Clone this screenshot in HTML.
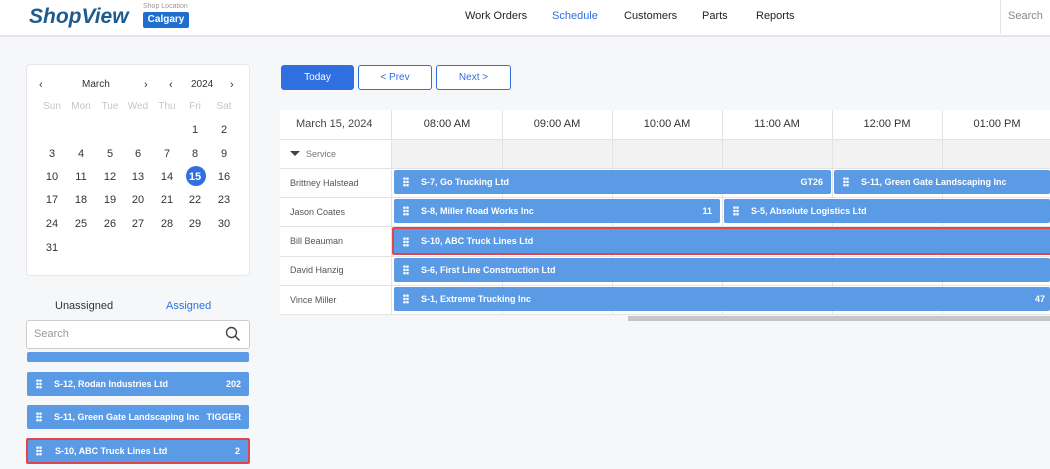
<!DOCTYPE html>
<html><head><style>
*{box-sizing:border-box;margin:0;padding:0}
body{width:1050px;height:469px;overflow:hidden;background:#f6f7f9;font-family:"Liberation Sans",sans-serif;position:relative;color:#333}
.a{position:absolute}
.hdr{left:0;top:0;width:1050px;height:37px;background:#fff;border-bottom:2px solid #e3e5e8}
.nav{top:10px;font-size:11px;color:#222}
.card{left:26px;top:64px;width:224px;height:212px;background:#fff;border:1px solid #e6e8eb;border-radius:4px}
.d{position:absolute;font-size:11px;color:#333;width:20px;text-align:center}
.wd{position:absolute;font-size:10px;color:#c4c6ca;width:30px;text-align:center}
.btn{top:65px;height:25px;border:1px solid #2f6fdf;border-radius:3px;font-size:10px;display:flex;align-items:center;justify-content:center;color:#2f6fdf;background:#fff}
.ev{position:absolute;background:#5b9be6;color:#fff;font-size:9px;font-weight:bold;height:24px;line-height:24px;padding-left:27px;border-radius:2px;white-space:nowrap;overflow:hidden}
.ev .g{position:absolute;left:9px;top:7px;width:6px;height:10px;background:radial-gradient(circle,#fff 1.2px,transparent 1.4px) 0 0/3px 3.3px}
.ev .r{position:absolute;right:8px;top:0}
.red{border:2px solid #e0474c;line-height:20px}
.lbl{position:absolute;left:290px;font-size:9px;color:#555}
.hh{position:absolute;top:118px;font-size:11px;color:#333;width:110px;text-align:center}
</style></head><body>
<div class="a hdr"></div>
<div class="a" style="left:29px;top:5px;font-size:21px;font-weight:bold;font-style:italic;color:#1e5b8c">ShopView</div>
<div class="a" style="left:143px;top:3px;font-size:7px;color:#999">Shop Location</div>
<div class="a" style="left:143px;top:12px;width:46px;height:16px;background:#1e6fcf;border-radius:2px;color:#fff;font-size:10px;font-weight:bold;text-align:center;line-height:16px">Calgary</div>
<div class="a nav" style="left:465px">Work Orders</div>
<div class="a nav" style="left:552px;color:#2f6fdf">Schedule</div>
<div class="a nav" style="left:624px">Customers</div>
<div class="a nav" style="left:702px">Parts</div>
<div class="a nav" style="left:756px">Reports</div>
<div class="a" style="left:1000px;top:0;width:50px;height:34px;border-left:1px solid #e3e5e8"></div>
<div class="a nav" style="left:1008px;color:#888">Search</div>

<div class="a card"></div>
<div class="a" style="left:39px;top:79px;font-size:11px">‹</div>
<div class="a" style="left:82px;top:79px;font-size:10px">March</div>
<div class="a" style="left:144px;top:79px;font-size:11px">›</div>
<div class="a" style="left:169px;top:79px;font-size:11px">‹</div>
<div class="a" style="left:191px;top:79px;font-size:10px">2024</div>
<div class="a" style="left:230px;top:79px;font-size:11px">›</div>
<div class="wd" style="left:37px;top:101px">Sun</div><div class="wd" style="left:66px;top:101px">Mon</div><div class="wd" style="left:95px;top:101px">Tue</div><div class="wd" style="left:123px;top:101px">Wed</div><div class="wd" style="left:152px;top:101px">Thu</div><div class="wd" style="left:180px;top:101px">Fri</div><div class="wd" style="left:209px;top:101px">Sat</div>
<div class="a" style="left:186px;top:166px;width:20px;height:20px;border-radius:50%;background:#2f6fdf"></div>
<div class="d" style="left:185px;top:124px">1</div><div class="d" style="left:214px;top:124px">2</div>
<div class="d" style="left:42px;top:148px">3</div><div class="d" style="left:71px;top:148px">4</div><div class="d" style="left:100px;top:148px">5</div><div class="d" style="left:128px;top:148px">6</div><div class="d" style="left:157px;top:148px">7</div><div class="d" style="left:185px;top:148px">8</div><div class="d" style="left:214px;top:148px">9</div>
<div class="d" style="left:42px;top:171px">10</div><div class="d" style="left:71px;top:171px">11</div><div class="d" style="left:100px;top:171px">12</div><div class="d" style="left:128px;top:171px">13</div><div class="d" style="left:157px;top:171px">14</div><div class="d" style="left:185px;top:171px;color:#fff;font-weight:bold">15</div><div class="d" style="left:214px;top:171px">16</div>
<div class="d" style="left:42px;top:194px">17</div><div class="d" style="left:71px;top:194px">18</div><div class="d" style="left:100px;top:194px">19</div><div class="d" style="left:128px;top:194px">20</div><div class="d" style="left:157px;top:194px">21</div><div class="d" style="left:185px;top:194px">22</div><div class="d" style="left:214px;top:194px">23</div>
<div class="d" style="left:42px;top:218px">24</div><div class="d" style="left:71px;top:218px">25</div><div class="d" style="left:100px;top:218px">26</div><div class="d" style="left:128px;top:218px">27</div><div class="d" style="left:157px;top:218px">28</div><div class="d" style="left:185px;top:218px">29</div><div class="d" style="left:214px;top:218px">30</div>
<div class="d" style="left:42px;top:242px">31</div>

<div class="a" style="left:55px;top:300px;font-size:11px;color:#333">Unassigned</div>
<div class="a" style="left:166px;top:300px;font-size:11px;color:#2f6fdf">Assigned</div>
<div class="a" style="left:26px;top:320px;width:224px;height:29px;background:#fff;border:1px solid #ccc;border-radius:3px"></div>
<div class="a" style="left:34px;top:328px;font-size:11px;color:#999">Search</div>
<svg class="a" style="left:225px;top:326px" width="16" height="16" viewBox="0 0 16 16"><circle cx="6.5" cy="6.5" r="5" fill="none" stroke="#444" stroke-width="1.4"/><path d="M10.2 10.2L14.5 14.5" stroke="#444" stroke-width="1.5"/></svg>
<div class="ev" style="left:27px;top:352px;width:222px;height:10px"></div>
<div class="ev" style="left:27px;top:372px;width:222px"><span class="g"></span>S-12, Rodan Industries Ltd<span class="r">202</span></div>
<div class="ev" style="left:27px;top:405px;width:222px"><span class="g"></span>S-11, Green Gate Landscaping Inc<span class="r">TIGGER</span></div>
<div class="ev red" style="left:26px;top:438px;width:224px;height:26px;line-height:22px"><span class="g" style="top:6px;left:8px"></span>S-10, ABC Truck Lines Ltd<span class="r">2</span></div>

<div class="a btn" style="left:281px;width:73px;background:#2f6fdf;color:#fff">Today</div>
<div class="a btn" style="left:358px;width:74px">&lt; Prev</div>
<div class="a btn" style="left:436px;width:75px">Next &gt;</div>

<div class="a" style="left:280px;top:110px;width:770px;height:205px;background:#fff"></div>
<div class="a" style="left:392px;top:139px;width:658px;height:29px;background:#f2f2f2"></div>
<svg class="a" style="left:280px;top:110px" width="770" height="205">
<g stroke="#e3e3e3" stroke-width="1">
<path d="M0 29.5H770M0 58.5H770M0 87.5H770M0 116.5H770M0 146.5H770M0 175.5H770M0 204.5H770"/>
<path d="M111.5 0V205M222.5 0V205M332.5 0V205M442.5 0V205M552.5 0V205M662.5 0V205"/>
</g></svg>
<div class="a" style="left:296px;top:118px;font-size:11px;color:#444">March 15, 2024</div>
<div class="hh" style="left:392px">08:00 AM</div><div class="hh" style="left:502px">09:00 AM</div><div class="hh" style="left:612px">10:00 AM</div><div class="hh" style="left:722px">11:00 AM</div><div class="hh" style="left:832px">12:00 PM</div><div class="hh" style="left:942px">01:00 PM</div>
<div class="a" style="left:290px;top:151px;width:0;height:0;border-left:5px solid transparent;border-right:5px solid transparent;border-top:5px solid #444"></div>
<div class="lbl" style="left:306px;top:149px;color:#777">Service</div>
<div class="lbl" style="top:178px">Brittney Halstead</div>
<div class="lbl" style="top:207px">Jason Coates</div>
<div class="lbl" style="top:236px">Bill Beauman</div>
<div class="lbl" style="top:265px">David Hanzig</div>
<div class="lbl" style="top:295px">Vince Miller</div>

<div class="ev" style="left:394px;top:170px;width:437px"><span class="g"></span>S-7, Go Trucking Ltd<span class="r">GT26</span></div>
<div class="ev" style="left:834px;top:170px;width:216px"><span class="g"></span>S-11, Green Gate Landscaping Inc</div>
<div class="ev" style="left:394px;top:199px;width:326px"><span class="g"></span>S-8, Miller Road Works Inc<span class="r">11</span></div>
<div class="ev" style="left:724px;top:199px;width:326px"><span class="g"></span>S-5, Absolute Logistics Ltd</div>
<div class="ev red" style="left:392px;top:227px;width:670px;height:28px;line-height:24px"><span class="g" style="top:8px"></span>S-10, ABC Truck Lines Ltd</div>
<div class="ev" style="left:394px;top:258px;width:656px"><span class="g"></span>S-6, First Line Construction Ltd</div>
<div class="ev" style="left:394px;top:287px;width:656px"><span class="g"></span>S-1, Extreme Trucking Inc<span class="r" style="right:5px">47</span></div>
<div class="a" style="left:628px;top:316px;width:422px;height:5px;background:#c4c6c8"></div>
</body></html>
